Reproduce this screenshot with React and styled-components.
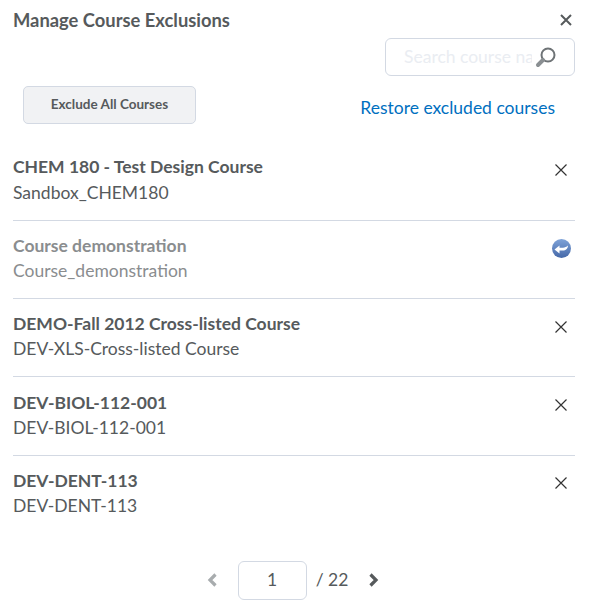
import React from 'react';
import styled, { createGlobalStyle } from 'styled-components';

const Global = createGlobalStyle`
    html, body {
        margin: 0;
        padding: 0;
        background: #fff;
        font-family: Lato, "Open Sans", sans-serif;
        color: #565a5c;
    }
`;

const Dialog = styled.div`
    width: 589px;
    height: 615px;
    box-sizing: border-box;
    padding: 0 14px 0 13px;
    overflow: hidden;
`;

const Header = styled.div`
    display: flex;
    justify-content: space-between;
    align-items: center;
    height: 38px;
    padding-top: 1px;
    box-sizing: border-box;
`;

const Title = styled.h1`
    margin: 0;
    font-size: 18.35px;
    font-weight: 700;
    line-height: 36px;
`;

const IconBtn = styled.button`
    display: flex;
    border: 0;
    padding: 0;
    background: none;
    margin-right: 3px;
`;

const SearchRow = styled.div`
    display: flex;
    justify-content: flex-end;
    height: 48px;
`;

const SearchWrap = styled.div`
    position: relative;
    width: 190px;
    height: 38px;
`;

const SearchInput = styled.input`
    width: 100%;
    height: 100%;
    box-sizing: border-box;
    border: 1px solid #d3d9e3;
    border-radius: 6px;
    padding: 0 42px 2px 18px;
    font-family: inherit;
    font-size: 17.5px;
    outline: none;
    &::placeholder {
        color: #eaedf2;
        opacity: 1;
    }
`;

const SearchIcon = styled.svg`
    position: absolute;
    right: 18px;
    top: 8px;
`;

const Actions = styled.div`
    display: flex;
    justify-content: space-between;
    align-items: center;
    padding: 0 20px 0 10px;
    height: 38px;
    margin-bottom: 18.2px;
`;

const ExcludeBtn = styled.button`
    width: 173px;
    height: 38px;
    box-sizing: border-box;
    border: 1px solid #d3d9e3;
    border-radius: 5px;
    background: #f1f2f4;
    color: #565a5c;
    font-family: inherit;
    font-size: 13.5px;
    font-weight: 700;
    padding: 0 0 3px;
`;

const RestoreLink = styled.a`
    color: #006fbf;
    font-size: 17.5px;
    line-height: 24px;
    position: relative;
    top: 3px;
`;

const Row = styled.div`
    display: flex;
    justify-content: space-between;
    height: 78.4px;
    box-sizing: border-box;
    padding-top: 12.2px;
    border-bottom: ${p => (p.$last ? 'none' : '1px solid #d3d9e3')};
    color: ${p => (p.$excluded ? '#8a8d8f' : '#565a5c')};
`;

const RowText = styled.div`
    display: flex;
    flex-direction: column;
`;

const RowTitle = styled.div`
    font-size: 17.5px;
    font-weight: 700;
    line-height: 25.2px;
`;

const RowSub = styled.div`
    font-size: 17.5px;
    line-height: 26px;
`;

const RowAction = styled.div`
    display: flex;
    width: 22px;
    height: 22px;
    margin: 4.5px 3px 0 0;
    align-items: center;
    justify-content: center;
`;

const Pager = styled.div`
    display: flex;
    justify-content: center;
    align-items: center;
    margin-top: 27.3px;
    padding-right: 2px;
`;

const PageInput = styled.input`
    width: 69px;
    height: 39px;
    box-sizing: border-box;
    border: 1px solid #d3d9e3;
    border-radius: 6px;
    margin: 0 9px 0 20px;
    padding: 0 0 2px;
    text-align: center;
    font-family: inherit;
    font-size: 17.5px;
    color: #565a5c;
    outline: none;
`;

const PageTotal = styled.span`
    font-size: 17.5px;
    margin: 0 20px 2px 0;
`;

const Chevron = styled.svg`
    margin-bottom: 2px;
`;

const XIcon = () => (
    <svg width="14" height="14" viewBox="0 0 14 14">
        <path d="M1.500 1.500l11 11M12.500 1.500l-11 11" stroke="#333" strokeWidth="1.2" fill="none" />
    </svg>
);

const RestoreIcon = () => (
    <svg width="19" height="19" viewBox="0 0 19 19">
        <defs>
            <linearGradient id="restoreFill" x1="0" y1="0" x2="0" y2="1">
                <stop offset="0" stopColor="#7fa3d8" />
                <stop offset="1" stopColor="#4568a8" />
            </linearGradient>
        </defs>
        <circle cx="9.500" cy="9.500" r="9.500" fill="url(#restoreFill)" />
        <path d="M2.500 10.500l5-4v2.200h3.500c1.800 0 3.500-.8 5-2.200-.2 3.500-2.300 5-5 5H7.500v3z" fill="#fff" />
    </svg>
);

const courses = [
    { name: 'CHEM 180 - Test Design Course', code: 'Sandbox_CHEM180' },
    { name: 'Course demonstration', code: 'Course_demonstration', excluded: true },
    { name: 'DEMO-Fall 2012 Cross-listed Course', code: 'DEV-XLS-Cross-listed Course' },
    { name: 'DEV-BIOL-112-001', code: 'DEV-BIOL-112-001' },
    { name: 'DEV-DENT-113', code: 'DEV-DENT-113' },
];

const App = () => {
    return (
        <>
            <Global />
            <Dialog>
                <Header>
                    <Title>Manage Course Exclusions</Title>
                    <IconBtn aria-label="Close">
                        <svg width="12" height="12" viewBox="0 0 12 12">
                            <path d="M1 1l10 10M11 1L1 11" stroke="#565a5c" strokeWidth="2" fill="none" />
                        </svg>
                    </IconBtn>
                </Header>
                <SearchRow>
                    <SearchWrap>
                        <SearchInput placeholder="Search course name" />
                        <SearchIcon width="22" height="22" viewBox="0 0 22 22">
                            <circle cx="13" cy="9" r="6.500" stroke="#6e7376" strokeWidth="2" fill="#fff" />
                            <path d="M8 14l-5 5" stroke="#8a8f92" strokeWidth="4" strokeLinecap="round" />
                        </SearchIcon>
                    </SearchWrap>
                </SearchRow>
                <Actions>
                    <ExcludeBtn>Exclude All Courses</ExcludeBtn>
                    <RestoreLink>Restore excluded courses</RestoreLink>
                </Actions>
                {courses.map((c, i) => (
                    <Row key={c.name} $excluded={c.excluded} $last={i === courses.length - 1}>
                        <RowText>
                            <RowTitle>{c.name}</RowTitle>
                            <RowSub>{c.code}</RowSub>
                        </RowText>
                        <RowAction>{c.excluded ? <RestoreIcon /> : <XIcon />}</RowAction>
                    </Row>
                ))}
                <Pager>
                    <Chevron width="12" height="16" viewBox="0 0 12 16">
                        <path d="M9.500 2.500L4 8l5.500 5.500" stroke="#a8acae" strokeWidth="3.200" fill="none" />
                    </Chevron>
                    <PageInput defaultValue="1" />
                    <PageTotal>/ 22</PageTotal>
                    <Chevron width="12" height="16" viewBox="0 0 12 16">
                        <path d="M2.500 2.500L8 8l-5.500 5.500" stroke="#565a5c" strokeWidth="3.200" fill="none" />
                    </Chevron>
                </Pager>
            </Dialog>
        </>
    );
};

export default App;
